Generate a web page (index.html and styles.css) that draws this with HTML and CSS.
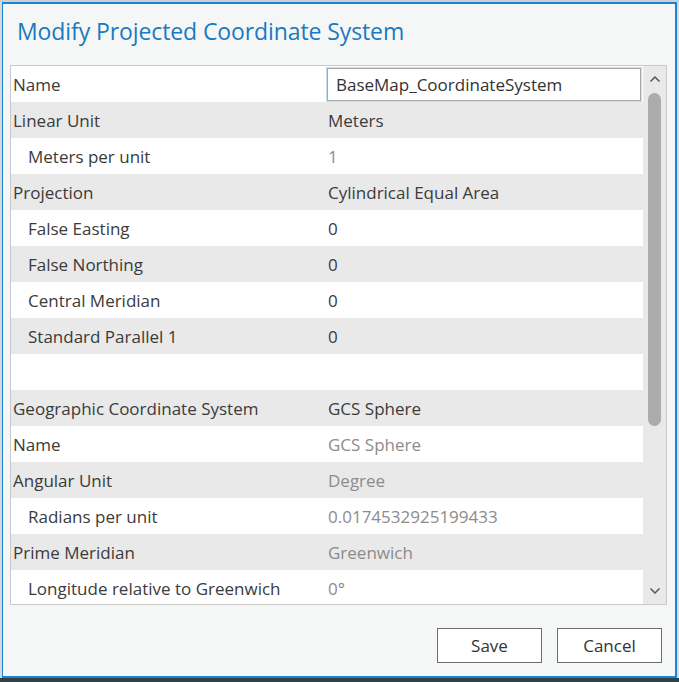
FILE: index.html
```html
<!DOCTYPE html>
<html>
<head>
<meta charset="utf-8">
<link rel="stylesheet" href="styles.css">
</head>
<body>
<div class="screen">
  <div class="backdrop-top"></div>
  <div class="dialog">
    <h1 class="title">Modify Projected Coordinate System</h1>
    <div class="panel">
      <div class="rows">
        <div class="row"><div class="label">Name</div><div class="value"><div class="input">BaseMap_CoordinateSystem</div></div></div>
        <div class="row alt"><div class="label">Linear Unit</div><div class="value">Meters</div></div>
        <div class="row"><div class="label indent">Meters per unit</div><div class="value muted">1</div></div>
        <div class="row alt"><div class="label">Projection</div><div class="value">Cylindrical Equal Area</div></div>
        <div class="row"><div class="label indent">False Easting</div><div class="value">0</div></div>
        <div class="row alt"><div class="label indent">False Northing</div><div class="value">0</div></div>
        <div class="row"><div class="label indent">Central Meridian</div><div class="value">0</div></div>
        <div class="row alt"><div class="label indent">Standard Parallel 1</div><div class="value">0</div></div>
        <div class="row"><div class="label"></div><div class="value"></div></div>
        <div class="row alt"><div class="label">Geographic Coordinate System</div><div class="value">GCS Sphere</div></div>
        <div class="row"><div class="label">Name</div><div class="value muted">GCS Sphere</div></div>
        <div class="row alt"><div class="label">Angular Unit</div><div class="value muted">Degree</div></div>
        <div class="row"><div class="label indent">Radians per unit</div><div class="value muted">0.0174532925199433</div></div>
        <div class="row alt"><div class="label">Prime Meridian</div><div class="value muted">Greenwich</div></div>
        <div class="row"><div class="label indent">Longitude relative to Greenwich</div><div class="value muted">0°</div></div>
      </div>
      <div class="scrollbar">
        <svg class="chev" width="12" height="8" viewBox="0 0 12 8"><path d="M1.5 6.5 L6 2 L10.5 6.5" fill="none" stroke="#555" stroke-width="1.5"/></svg>
        <div class="track"><div class="thumb"></div></div>
        <svg class="chev" width="12" height="8" viewBox="0 0 12 8"><path d="M1.5 1.5 L6 6 L10.5 1.5" fill="none" stroke="#555" stroke-width="1.5"/></svg>
      </div>
    </div>
    <div class="actions">
      <button class="btn">Save</button>
      <button class="btn">Cancel</button>
    </div>
  </div>
</div>
</body>
</html>
```

FILE: styles.css
```css
html, body {
  margin: 0;
  padding: 0;
}
body {
  font-family: "Open Sans", "Noto Sans", sans-serif;
}
.screen {
  width: 679px;
  height: 682px;
  background: linear-gradient(to bottom, #d9d9d9 0, #d9d9d9 678px, #2e4048 678px, #2e4048 100%);
  overflow: hidden;
}
.backdrop-top {
  height: 2px;
  background: #cfcfcf;
}
.dialog {
  box-sizing: border-box;
  margin-left: 2px;
  width: 675px;
  height: 676px;
  border: 2px solid #1a84d6;
  border-left-width: 1px;
  background: #f5f7f6;
  display: flex;
  flex-direction: column;
}
.title {
  margin: 0;
  padding: 12px 0 0 14px;
  height: 47px;
  box-sizing: border-box;
  font-weight: normal;
  font-size: 23px;
  line-height: 30px;
  color: #1b79c3;
  letter-spacing: -0.1px;
}
.panel {
  box-sizing: border-box;
  margin: 14px 0 0 7px;
  width: 657px;
  height: 540px;
  border: 1px solid #c9c9c9;
  display: flex;
  background: #fff;
}
.rows {
  width: 632px;
  overflow: hidden;
}
.row {
  height: 36px;
  display: flex;
  align-items: center;
  background: #fff;
  font-size: 17px;
  color: #3b3b3b;
}
.row.alt {
  background: #e9e9e9;
}
.label {
  width: 317px;
  padding-left: 2px;
  box-sizing: border-box;
  white-space: nowrap;
}
.label.indent {
  padding-left: 17px;
}
.value {
  flex: 1;
  white-space: nowrap;
}
.value.muted {
  color: #8c8c8c;
}
.input {
  box-sizing: border-box;
  width: 314px;
  height: 33px;
  margin-left: -1px;
  border: 1px solid #a9a9a9;
  box-shadow: 0 0 0 1px #bfe0f5;
  padding-left: 8px;
  line-height: 31px;
  background: #fff;
  color: #333;
}
.scrollbar {
  width: 23px;
  background: #e9e9e9;
  display: flex;
  flex-direction: column;
  align-items: center;
}
.chev {
  display: block;
  margin: 9px 0;
}
.track {
  flex: 1;
  width: 100%;
  display: flex;
  justify-content: center;
}
.thumb {
  width: 13px;
  height: 333px;
  margin-top: 1px;
  border-radius: 7px;
  background: #acacac;
}
.actions {
  display: flex;
  justify-content: flex-end;
  gap: 15px;
  padding: 23px 13px 0 0;
}
.btn {
  box-sizing: border-box;
  width: 105px;
  height: 35px;
  border: 1px solid #6d6d6d;
  background: #fff;
  font-family: inherit;
  font-size: 17px;
  color: #333;
  padding: 0;
}
```
